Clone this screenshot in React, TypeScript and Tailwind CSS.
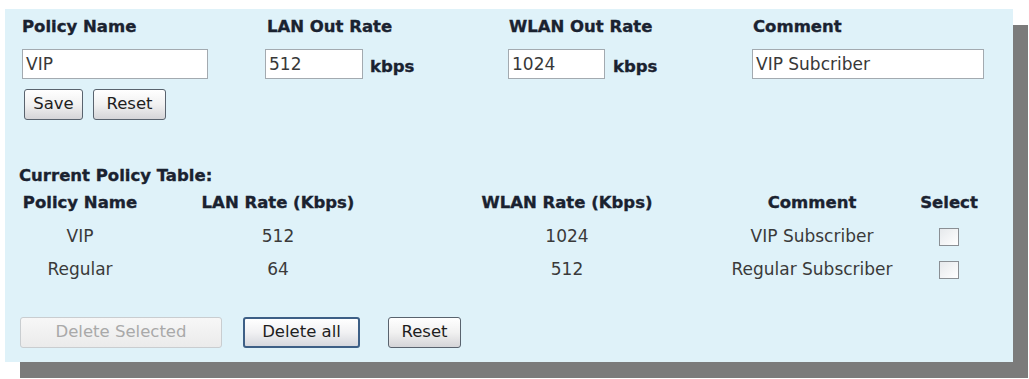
import React from "react";

const font = { fontFamily: '"DejaVu Sans", "Liberation Sans", sans-serif' };

function Btn({ children, w, variant = "normal" }: { children: React.ReactNode; w: string; variant?: "normal" | "focus" | "disabled" }) {
  const base = "h-[31px] rounded-[3px] border text-[16.5px] flex items-center justify-center leading-none";
  const cls =
    variant === "disabled"
      ? "border-[#c9cdd0] bg-gradient-to-b from-[#f7f7f7] to-[#ebebeb] text-[#a9a9a9]"
      : variant === "focus"
      ? "border-[#3d5f86] border-2 bg-gradient-to-b from-white via-[#f1f1f3] to-[#d6d8de] text-[#1e1e1e]"
      : "border-[#59636e] bg-gradient-to-b from-white via-[#f1f1f1] to-[#d5d5d8] text-[#1e1e1e]";
  return <div className={`${base} ${cls} ${w}`}>{children}</div>;
}

function Check() {
  return <div className="w-[20px] h-[18px] border border-[#8a8f94] bg-gradient-to-br from-[#e6e9ec] to-white" />;
}

const bold = "font-bold text-[16.5px] text-[#1a2230] [-webkit-text-stroke:0.35px_#1a2230]";

export default function App() {
  const rows = [
    { name: "VIP", lan: "512", wlan: "1024", comment: "VIP Subscriber" },
    { name: "Regular", lan: "64", wlan: "512", comment: "Regular Subscriber" },
  ];
  return (
    <div className="w-[1029px] h-[379px] bg-white overflow-hidden pt-[9px] pl-[5px]" style={font}>
      <div className="w-[1008px] h-[353px] bg-[#dff2f9] shadow-[15px_16px_0_0_#7b7b7b] pl-[17px] pt-[8px] flex flex-col">
        {/* labels */}
        <div className={`grid grid-cols-[245px_242px_244px_250px] h-[20px] items-center leading-none ${bold}`}>
          <div>Policy Name</div>
          <div>LAN Out Rate</div>
          <div>WLAN Out Rate</div>
          <div>Comment</div>
        </div>
        {/* inputs */}
        <div className="grid grid-cols-[243px_243px_244px_250px] mt-[12px] h-[30px] items-center text-[17px] text-[#383838]">
          <div className="w-[186px] h-[30px] bg-white border border-[#a3aab0] flex items-center pl-[3px]">VIP</div>
          <div className="flex items-center gap-[7px]">
            <div className="w-[98px] h-[30px] bg-white border border-[#a3aab0] flex items-center pl-[3px]">512</div>
            <span className={`pt-[6px] ${bold}`}>kbps</span>
          </div>
          <div className="flex items-center gap-[8px]">
            <div className="w-[97px] h-[30px] bg-white border border-[#a3aab0] flex items-center pl-[3px]">1024</div>
            <span className={`pt-[6px] ${bold}`}>kbps</span>
          </div>
          <div className="w-[232px] h-[30px] bg-white border border-[#a3aab0] flex items-center pl-[3px]">VIP Subcriber</div>
        </div>
        {/* save/reset */}
        <div className="flex gap-[10px] mt-[10px] pl-[2px]">
          <Btn w="w-[59px]">Save</Btn>
          <Btn w="w-[73px]">Reset</Btn>
        </div>
        {/* table title */}
        <div className={`mt-[46px] h-[20px] flex items-center -ml-[3px] ${bold}`}>Current Policy Table:</div>
        {/* table */}
        <div className="mt-[1px] grid grid-cols-[116px_280px_298px_192px_82px] auto-rows-[33px] items-center text-center text-[17px] text-[#3a3a3a]">
          <div className={`whitespace-nowrap ${bold}`}>Policy Name</div>
          <div className={`whitespace-nowrap ${bold}`}>LAN Rate (Kbps)</div>
          <div className={`whitespace-nowrap ${bold}`}>WLAN Rate (Kbps)</div>
          <div className={`whitespace-nowrap ${bold}`}>Comment</div>
          <div className={`whitespace-nowrap ${bold}`}>Select</div>
          {rows.map((r) => (
            <React.Fragment key={r.name}>
              <div>{r.name}</div>
              <div>{r.lan}</div>
              <div>{r.wlan}</div>
              <div className="whitespace-nowrap">{r.comment}</div>
              <div className="flex justify-center"><Check /></div>
            </React.Fragment>
          ))}
        </div>
        {/* bottom buttons */}
        <div className="flex mt-[31px] -ml-[2px]">
          <Btn w="w-[202px]" variant="disabled">Delete Selected</Btn>
          <div className="ml-[21px]"><Btn w="w-[117px]" variant="focus">Delete all</Btn></div>
          <div className="ml-[28px]"><Btn w="w-[73px]">Reset</Btn></div>
        </div>
      </div>
    </div>
  );
}
